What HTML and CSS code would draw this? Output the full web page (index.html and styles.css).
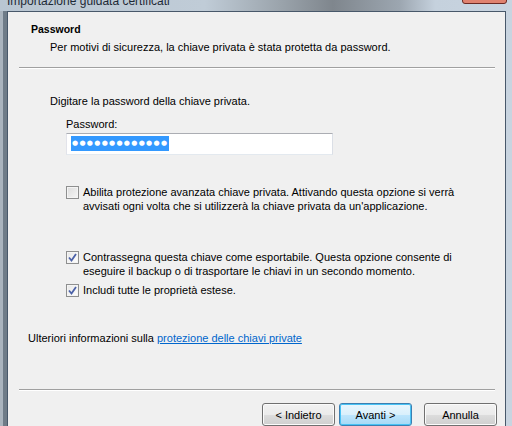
FILE: index.html
```html
<!DOCTYPE html>
<html lang="it">
<head>
<meta charset="utf-8">
<title>Importazione guidata certificati</title>
<link rel="stylesheet" href="styles.css">
</head>
<body>
<div class="titlebar">
  <span class="title">Importazione guidata certificati</span>
  <span class="close"></span>
</div>
<div class="frame">
  <div class="edge-left"></div>
  <div class="content">
    <div class="header">
      <div class="h-title">Password</div>
      <div class="h-sub">Per motivi di sicurezza, la chiave privata è stata protetta da password.</div>
    </div>
    <div class="sep"></div>
    <div class="body">
      <div class="prompt">Digitare la password della chiave privata.</div>
      <div class="field">
        <div class="label">Password:</div>
        <div class="input"><span class="sel">●●●●●●●●●●●●●</span></div>
      </div>
      <div class="opts">
        <div class="opt opt1">
          <span class="cb"></span>
          <span class="opt-text">Abilita protezione avanzata chiave privata. Attivando questa opzione si verrà avvisati ogni volta che si utilizzerà la chiave privata da un'applicazione.</span>
        </div>
        <div class="opt opt2">
          <span class="cb checked"><svg viewBox="0 0 9 9" width="9" height="9"><path d="M1 4.5 L3.5 7.5 L8 1" fill="none" stroke="#4b61a8" stroke-width="1.8"/></svg></span>
          <span class="opt-text">Contrassegna questa chiave come esportabile. Questa opzione consente di eseguire il backup o di trasportare le chiavi in un secondo momento.</span>
        </div>
        <div class="opt opt3">
          <span class="cb checked"><svg viewBox="0 0 9 9" width="9" height="9"><path d="M1 4.5 L3.5 7.5 L8 1" fill="none" stroke="#4b61a8" stroke-width="1.8"/></svg></span>
          <span class="opt-text">Includi tutte le proprietà estese.</span>
        </div>
      </div>
      <div class="info">Ulteriori informazioni sulla <a href="#">protezione delle chiavi private</a></div>
    </div>
    <div class="sep sep2"></div>
    <div class="buttons">
      <span class="btn">&lt; Indietro</span>
      <span class="btn focus">Avanti &gt;</span>
      <span class="btn cancel">Annulla</span>
    </div>
  </div>
  <div class="edge-right"></div>
</div>
</body>
</html>
```
FILE: styles.css
```css
html, body {
  margin: 0;
  padding: 0;
  width: 512px;
  height: 426px;
  overflow: hidden;
  background: #c7d3de;
  font-family: "Liberation Sans", Arial, sans-serif;
  font-size: 11px;
  color: #000;
}
.titlebar {
  height: 11px;
  position: relative;
  overflow: hidden;
  background: linear-gradient(90deg, #b9c6d2 0%, #c0ccd7 40%, #9aa3ab 55%, #7f868d 65%, #9ca6b0 78%, #c5d1dd 85%, #c8d4e0 100%);
}
.title {
  position: absolute;
  left: 7px;
  top: -6px;
  font-size: 12px;
  line-height: 14px;
  color: #1e2a36;
  white-space: nowrap;
}
.close {
  position: absolute;
  left: 462px;
  top: -18px;
  width: 43px;
  height: 20px;
  border: 1px solid #6b2a24;
  border-radius: 3px;
  background: #e0826f;
}
.frame {
  display: flex;
  height: 415px;
}
.edge-left {
  width: 7px;
  background: linear-gradient(90deg, #aab4be 0px, #aab4be 3px, #6f7c88 3px, #6f7c88 7px);
}
.edge-right {
  width: 6px;
  background: #c8d4e0;
}
.content {
  flex: 1;
  background: #f0f0f0;
  border: 1px solid #48586a;
  border-bottom: none;
  display: flex;
  flex-direction: column;
}
.header {
  padding: 10px 0 0 23px;
  height: 46px;
  box-sizing: border-box;
}
.h-title {
  font-weight: bold;
  font-size: 10.5px;
  line-height: 14px;
}
.h-sub {
  margin-top: 4px;
  padding-left: 19px;
  line-height: 14px;
}
.sep {
  margin: 11px 10px 0 11px;
  height: 1px;
  background: #a0a0a0;
  border-bottom: 1px solid #ffffff;
}
.body {
  padding-left: 42px;
  height: 328px;
  box-sizing: border-box;
}
.prompt {
  margin-top: 25px;
  line-height: 14px;
}
.field {
  margin-left: 16px;
  margin-top: 9px;
}
.label {
  line-height: 14px;
}
.input {
  margin-top: 2px;
  width: 261px;
  height: 20px;
  border: 1px solid #abadb3;
  border-color: #abadb3 #dbdfe6 #e3e9ef #e2e3ea;
  background: #fff;
  display: flex;
  align-items: center;
  padding-left: 4px;
}
.sel {
  background: #3399ff;
  color: #fff;
  font-family: "DejaVu Sans", sans-serif;
  font-size: 7px;
  letter-spacing: 1.3px;
  line-height: 15px;
  height: 15px;
  padding: 0 1px 0 1px;
}
.opts {
  margin-left: 16px;
}
.opt {
  display: flex;
  align-items: flex-start;
  gap: 4px;
}
.opt1 { margin-top: 30px; }
.opt2 { margin-top: 36px; }
.opt3 { margin-top: 4px; }
.opt-text {
  line-height: 14.5px;
  width: 392px;
}
.cb {
  flex: none;
  width: 11px;
  height: 11px;
  margin-top: 1px;
  border: 1px solid #8e8f8f;
  background: linear-gradient(135deg, #dcdcdc, #f6f6f6);
  box-shadow: inset 0 0 0 1px #f4f4f4;
  display: flex;
  align-items: center;
  justify-content: center;
}
.cb.checked {
  background: linear-gradient(135deg, #e6e6e6, #ffffff);
}
.info {
  margin-top: 34px;
  margin-left: -22px;
  line-height: 14px;
}
.info a {
  color: #0066cc;
  text-decoration: underline;
}
.buttons {
  display: flex;
  padding: 12px 0 0 254px;
  gap: 4px;
}
.btn {
  width: 71px;
  height: 21px;
  border: 1px solid #707070;
  border-radius: 3px;
  background: linear-gradient(180deg, #f2f2f2 0%, #ebebeb 50%, #dddddd 51%, #cfcfcf 100%);
  box-shadow: inset 0 0 0 1px #fbfbfb;
  display: flex;
  align-items: center;
  justify-content: center;
  line-height: 14px;
}
.btn.focus {
  border-color: #3c7fb1;
  background: linear-gradient(180deg, #eaf6fd 0%, #d9f0fc 50%, #bee6fd 51%, #a7d9f5 100%);
  box-shadow: inset 0 0 0 1px #48c3f5;
}
.btn.cancel {
  margin-left: 8px;
}
```
